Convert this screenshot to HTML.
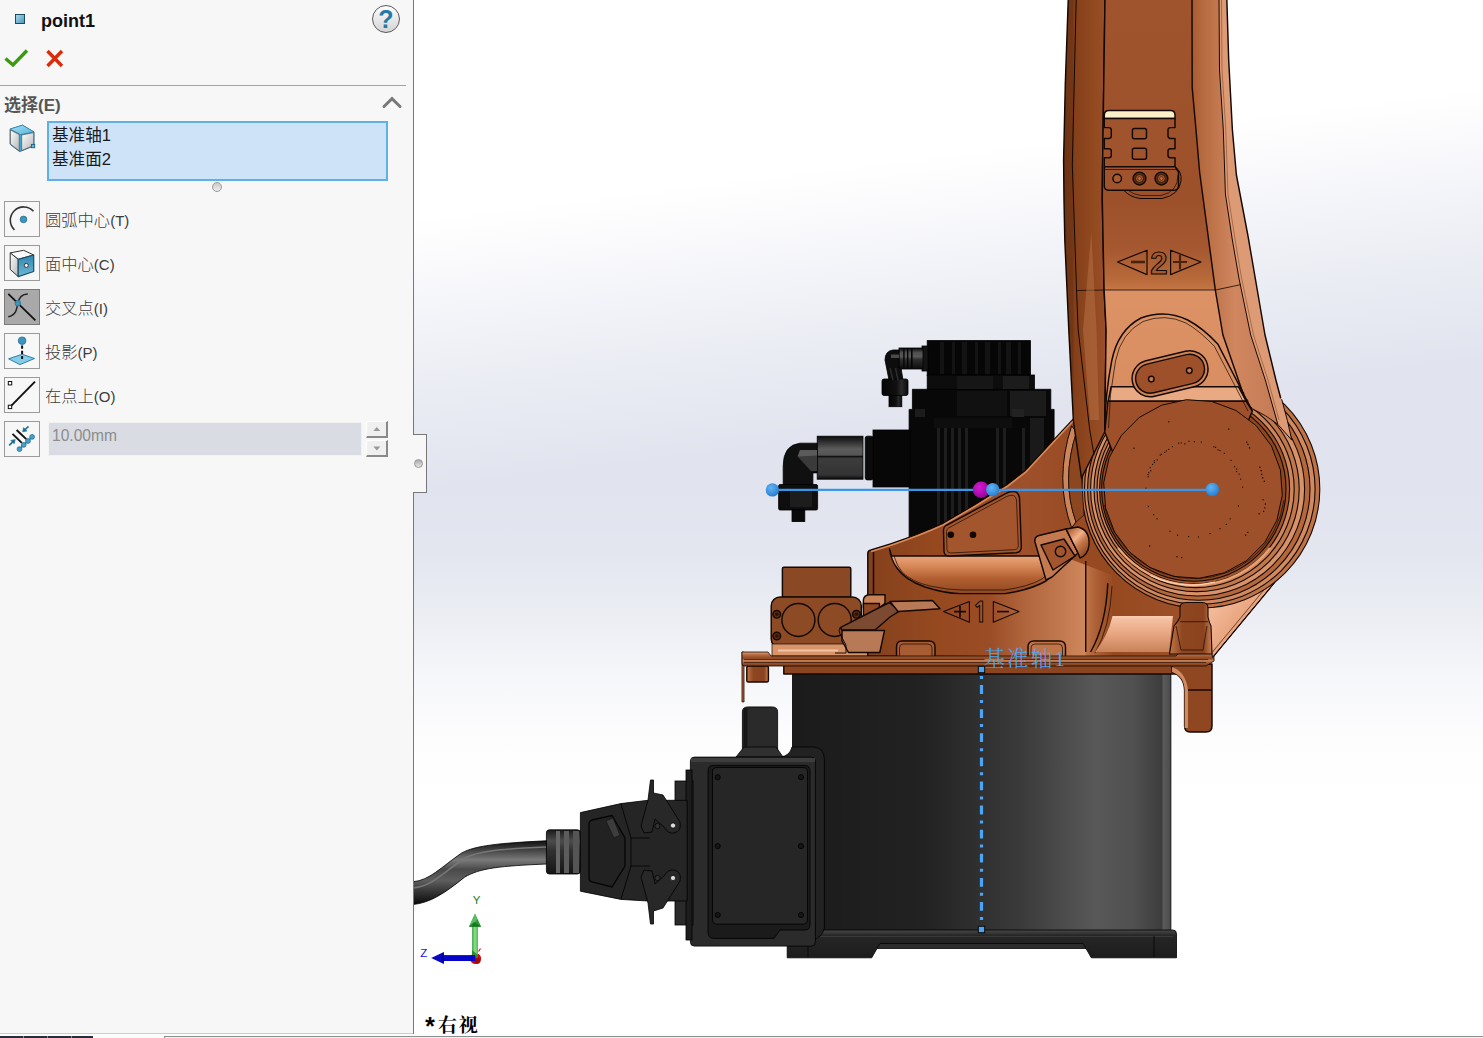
<!DOCTYPE html>
<html lang="zh">
<head>
<meta charset="utf-8">
<title>point1</title>
<style>
html,body{margin:0;padding:0;}
body{width:1483px;height:1038px;overflow:hidden;position:relative;background:#fff;
 font-family:"Liberation Sans","Noto Sans CJK SC",sans-serif;color:#444;}
#view{position:absolute;left:0;top:0;width:1483px;height:492px;background:linear-gradient(173deg,#ffffff 0%,#ffffff 40%,#fbfbfd 46%,#f3f4f9 55%,#ebedf4 65%,#e5e8f1 74%,#e1e4ee 80.5%,#e1e4ee 100%);}
#view2{position:absolute;left:0;top:492px;width:1483px;height:546px;background:linear-gradient(180deg,#e1e4ee 0%,#e4e7f0 12.5%,#eceef4 23.4%,#f6f7fa 34.4%,#fdfdfe 45.4%,#ffffff 55%,#ffffff 100%);}
#scene{position:absolute;left:0;top:0;width:1483px;height:1038px;}
#panel{position:absolute;left:0;top:0;width:413px;height:1033.5px;background:#f7f7f7;border-right:1.5px solid #787878;}
#tab{position:absolute;left:414px;top:434px;width:12px;height:57px;background:#f7f7f7;border:1.5px solid #787878;border-left:none;}
#tab::before{content:"";position:absolute;left:-2.5px;top:0;width:4px;height:100%;background:#f7f7f7;}
#tab i{position:absolute;left:0.3px;top:24px;width:9px;height:9px;border-radius:50%;box-sizing:border-box;border:1px solid #9a9a9a;background:linear-gradient(#a9a9a9,#e6e6e6);}
.abs{position:absolute;}
#title{left:41px;top:10px;font-weight:bold;font-size:18px;color:#111;line-height:22px;}
#sq{left:15px;top:14px;width:10px;height:10px;box-sizing:border-box;border:1.5px solid #1d4a63;background:linear-gradient(135deg,#a7d6ea,#4d9bbb);}
#help{left:372px;top:5px;width:28px;height:28px;box-sizing:border-box;border-radius:50%;border:1.3px solid #5a5a5a;background:linear-gradient(#fdfdfd,#d4d4d4);text-align:center;font-weight:bold;font-size:25px;line-height:26.5px;color:#2379a8;}
#sep{left:0;top:85px;width:406px;height:1.4px;background:#a3a3a3;}
#sel{left:4px;top:95px;font-weight:bold;font-size:17px;color:#555;line-height:22px;}
#list{left:47px;top:121px;width:341px;height:60px;box-sizing:border-box;border:2px solid #5eb0e6;background:#cfe3f8;font-size:16.6px;color:#1a1a1a;line-height:24px;padding:1px 0 0 3px;}
#grip{left:212px;top:182px;width:10px;height:10px;box-sizing:border-box;border-radius:50%;border:1px solid #9a9a9a;background:linear-gradient(#c9c9c9,#efefef);}
.btn{position:absolute;left:4px;width:36px;height:36px;box-sizing:border-box;border:1px solid #9b9b9b;background:#f7f7f7;}
.btn.on{background:#a9a9a9;border-color:#7a7a7a;}
.lbl{position:absolute;left:45px;font-size:16.3px;font-weight:300;color:#3c3c3c;margin-top:1px;line-height:24px;white-space:nowrap;}
.lbl span{font-size:15px;}
#inp{left:48px;top:422px;width:314px;height:34px;box-sizing:border-box;border:1.5px solid #f2f2f2;background:#d9dce2;font-size:15.6px;color:#8c8c8c;line-height:26px;padding-left:3px;}
.sp{position:absolute;left:366px;width:22px;height:17px;box-sizing:border-box;background:#f0f0f0;border:1px solid #fff;border-right:2px solid #8a8a8a;border-bottom:2px solid #8a8a8a;}
#bot{left:164px;top:1035.8px;width:1319px;height:3px;background:#f1f1f1;border-top:1.3px solid #8e8e8e;border-left:1px solid #8e8e8e;}
#bot0{left:0;top:1033.5px;width:1483px;height:5px;background:#fdfdfd;}
#botl{left:0;top:1033px;width:413px;height:1px;background:#cdcdcd;}
#botd{left:0;top:1036.3px;width:93px;height:2px;background:repeating-linear-gradient(90deg,#2b2b3c 0,#2b2b3c 23px,#8a8a96 23px,#8a8a96 24px);}
#vname{left:424.5px;top:1013.5px;font-family:"Liberation Serif","Noto Serif CJK SC",serif;font-weight:bold;font-size:19px;letter-spacing:1.8px;color:#000;line-height:24px;white-space:nowrap;}
#vname b{font-family:"Liberation Mono",monospace;font-size:25px;letter-spacing:0;position:relative;top:4.5px;margin-right:0.5px;margin-left:-2px;}
</style>
</head>
<body>
<div id="view"></div><div id="view2"></div>
<svg id="scene" viewBox="0 0 1483 1038" width="1483" height="1038">
<defs>
<linearGradient id="gArmL" x1="0" y1="0" x2="1" y2="0"><stop offset="0" stop-color="#6c3313"/><stop offset="0.22" stop-color="#733716"/><stop offset="0.26" stop-color="#84401b"/><stop offset="0.7" stop-color="#92491f"/><stop offset="1" stop-color="#99502a"/></linearGradient>
<linearGradient id="gArmF" gradientUnits="userSpaceOnUse" x1="0" y1="0" x2="0" y2="400"><stop offset="0" stop-color="#a0542d"/><stop offset="0.5" stop-color="#9d512b"/><stop offset="0.62" stop-color="#a55830"/><stop offset="0.7" stop-color="#b86a3a"/><stop offset="0.724" stop-color="#c47645"/><stop offset="0.7245" stop-color="#dc9264"/><stop offset="1" stop-color="#d98e61"/></linearGradient>
<linearGradient id="gArmR" x1="0" y1="0" x2="1" y2="0"><stop offset="0" stop-color="#a9592f"/><stop offset="0.12" stop-color="#b66a40"/><stop offset="0.5" stop-color="#d0875f"/><stop offset="0.8" stop-color="#c98058"/><stop offset="1" stop-color="#c47a52"/></linearGradient>
<linearGradient id="gHouse" gradientUnits="userSpaceOnUse" x1="868" y1="0" x2="1215" y2="0"><stop offset="0" stop-color="#84411d"/><stop offset="0.2" stop-color="#96491f"/><stop offset="0.45" stop-color="#9d502a"/><stop offset="0.7" stop-color="#96491f"/><stop offset="1" stop-color="#a0542d"/></linearGradient>
<linearGradient id="gHouseLt" gradientUnits="userSpaceOnUse" x1="990" y1="0" x2="1112" y2="0"><stop offset="0" stop-color="#c98055" stop-opacity="0"/><stop offset="0.5" stop-color="#c98055" stop-opacity="0.75"/><stop offset="0.78" stop-color="#cf875c" stop-opacity="1"/><stop offset="0.785" stop-color="#c07448" stop-opacity="1"/><stop offset="1" stop-color="#a85c33" stop-opacity="0.2"/></linearGradient>
<linearGradient id="gGroove" gradientUnits="userSpaceOnUse" x1="0" y1="556" x2="0" y2="594"><stop offset="0" stop-color="#e9a57c"/><stop offset="0.25" stop-color="#d98a5a"/><stop offset="0.6" stop-color="#b05e30"/><stop offset="1" stop-color="#8e4722"/></linearGradient>
<linearGradient id="gCyl" gradientUnits="userSpaceOnUse" x1="792" y1="0" x2="1171" y2="0"><stop offset="0" stop-color="#1b1b1b"/><stop offset="0.35" stop-color="#222"/><stop offset="0.6" stop-color="#3a3a3a"/><stop offset="0.8" stop-color="#585858"/><stop offset="0.9" stop-color="#505050"/><stop offset="0.975" stop-color="#3d3d3d"/><stop offset="0.98" stop-color="#5a5a5a"/><stop offset="1" stop-color="#4a4a4a"/></linearGradient>
<linearGradient id="gFoot" x1="0" y1="0" x2="0" y2="1"><stop offset="0" stop-color="#4a4a4a"/><stop offset="0.2" stop-color="#262626"/><stop offset="1" stop-color="#1c1c1c"/></linearGradient>
<linearGradient id="gFlange" x1="0" y1="0" x2="0" y2="1"><stop offset="0" stop-color="#e0a07a"/><stop offset="0.22" stop-color="#b5673a"/><stop offset="0.45" stop-color="#8c4822"/><stop offset="0.62" stop-color="#c88158"/><stop offset="0.8" stop-color="#9a5029"/><stop offset="1" stop-color="#7c3d19"/></linearGradient>
<linearGradient id="gNut" x1="0" y1="0" x2="0" y2="1"><stop offset="0" stop-color="#0c0c0c"/><stop offset="0.3" stop-color="#5c5c5c"/><stop offset="0.44" stop-color="#555"/><stop offset="0.47" stop-color="#111"/><stop offset="0.52" stop-color="#3c3c3c"/><stop offset="0.9" stop-color="#333"/><stop offset="1" stop-color="#0a0a0a"/></linearGradient>
<linearGradient id="gTube" x1="0" y1="0" x2="0" y2="1"><stop offset="0" stop-color="#0a0a0a"/><stop offset="0.22" stop-color="#4e4e4e"/><stop offset="0.4" stop-color="#5a5a5a"/><stop offset="0.55" stop-color="#2e2e2e"/><stop offset="1" stop-color="#0c0c0c"/></linearGradient>
<linearGradient id="gNutH" x1="0" y1="0" x2="1" y2="0"><stop offset="0" stop-color="#060606"/><stop offset="0.55" stop-color="#101010"/><stop offset="0.75" stop-color="#2a2a2a"/><stop offset="1" stop-color="#0a0a0a"/></linearGradient>
<linearGradient id="gCable" x1="0" y1="0" x2="0" y2="1"><stop offset="0" stop-color="#111"/><stop offset="0.12" stop-color="#3a3a3a"/><stop offset="0.3" stop-color="#7a7a7a"/><stop offset="0.45" stop-color="#4a4a4a"/><stop offset="0.62" stop-color="#5e5e5e"/><stop offset="0.85" stop-color="#2a2a2a"/><stop offset="1" stop-color="#0a0a0a"/></linearGradient>
<linearGradient id="gGland" x1="0" y1="0" x2="0" y2="1"><stop offset="0" stop-color="#1a1a1a"/><stop offset="0.25" stop-color="#4c4c4c"/><stop offset="0.45" stop-color="#333"/><stop offset="1" stop-color="#151515"/></linearGradient>
<radialGradient id="gBall" cx="0.4" cy="0.35" r="0.7"><stop offset="0" stop-color="#63b3f2"/><stop offset="0.6" stop-color="#3b92df"/><stop offset="1" stop-color="#2a78c2"/></radialGradient>
<radialGradient id="gMag" cx="0.4" cy="0.35" r="0.7"><stop offset="0" stop-color="#d41bd0"/><stop offset="0.7" stop-color="#a80aa8"/><stop offset="1" stop-color="#8a0790"/></radialGradient>
<linearGradient id="gLug" x1="0" y1="0" x2="1" y2="0"><stop offset="0" stop-color="#c47647"/><stop offset="0.3" stop-color="#8e4721"/><stop offset="0.8" stop-color="#8a431e"/><stop offset="1" stop-color="#c98055"/></linearGradient>
<linearGradient id="gGlint" x1="0" y1="0" x2="0" y2="1"><stop offset="0" stop-color="#f6c6aa"/><stop offset="0.45" stop-color="#eaa985"/><stop offset="1" stop-color="#c98259"/></linearGradient>
<linearGradient id="gGlint2" gradientUnits="userSpaceOnUse" x1="1215" y1="600" x2="1260" y2="640"><stop offset="0" stop-color="#f4bd9e"/><stop offset="0.5" stop-color="#e9a680"/><stop offset="1" stop-color="#cf8a62"/></linearGradient>
<linearGradient id="gBoss" gradientUnits="userSpaceOnUse" x1="1068" y1="532" x2="1088" y2="552"><stop offset="0" stop-color="#b5673a"/><stop offset="0.35" stop-color="#f3b088"/><stop offset="0.6" stop-color="#c5774a"/><stop offset="1" stop-color="#8e4721"/></linearGradient>
<linearGradient id="gRing" gradientUnits="userSpaceOnUse" x1="1100" y1="380" x2="1300" y2="600"><stop offset="0" stop-color="#c77a4c"/><stop offset="0.5" stop-color="#b3663a"/><stop offset="1" stop-color="#c98258"/></linearGradient>
</defs>
<g stroke="#000" stroke-width="0.8">
<rect x="927.2" y="340.6" width="103.2" height="35" fill="#060606"/>
<rect x="927.2" y="375" width="107.2" height="15" fill="#0d0d0d"/>
<path d="M912.4 389.3 H1050.8 V409.4 H1054.1 V560 H909.1 V409.4 H912.4 Z" fill="#080808"/>
<rect x="873" y="430" width="37" height="57" fill="#070707"/>
</g>
<rect x="940" y="342" width="4" height="32" fill="#131313"/><rect x="952" y="342" width="3" height="32" fill="#131313"/><rect x="962" y="342" width="5" height="32" fill="#131313"/><rect x="975" y="342" width="3" height="32" fill="#131313"/><rect x="985" y="342" width="5" height="32" fill="#131313"/><rect x="998" y="342" width="3" height="32" fill="#131313"/><rect x="1006" y="342" width="5" height="32" fill="#131313"/><rect x="1018" y="342" width="3" height="32" fill="#131313"/>
<rect x="957" y="376" width="36" height="13" fill="#161616"/><rect x="1003" y="376" width="26" height="13" fill="#1c1c1c"/>
<rect x="957" y="391" width="50" height="25" fill="#111"/><rect x="1010" y="391" width="36" height="25" fill="#1b1b1b"/><rect x="1012" y="409" width="12" height="8" fill="#222"/><rect x="915" y="409" width="10" height="8" fill="#1c1c1c"/>
<rect x="934" y="418" width="78" height="10" fill="#0e0e0e"/>
<rect x="937" y="428" width="3" height="125" fill="#1e1e1e"/><rect x="944" y="428" width="3" height="125" fill="#1e1e1e"/><rect x="951" y="428" width="3" height="125" fill="#1e1e1e"/><rect x="958" y="428" width="3" height="125" fill="#1e1e1e"/><rect x="965" y="428" width="3" height="125" fill="#1e1e1e"/><rect x="996" y="428" width="3" height="125" fill="#1e1e1e"/><rect x="1003" y="428" width="3" height="125" fill="#1e1e1e"/><rect x="1022" y="428" width="3" height="125" fill="#1e1e1e"/>
<rect x="1030" y="418" width="14" height="60" fill="#1a1a1a"/>
<g stroke="#000" stroke-width="0.8">
<rect x="922" y="346" width="6" height="25" fill="#141414"/>
<rect x="899" y="348" width="24" height="21" fill="url(#gTube)"/>
<path d="M899 350 H893 Q885 351 885 360 L889 380 H903 L901 368 H899 Z" fill="#0d0d0d"/>
<rect x="882" y="379" width="26" height="16.5" rx="2" fill="url(#gNutH)"/>
<rect x="889" y="395.5" width="12.8" height="11.2" fill="url(#gNutH)"/>
</g>
<rect x="903.2" y="348" width="1.4" height="21" fill="#050505"/><rect x="907" y="348" width="1.4" height="21" fill="#050505"/><rect x="911" y="348" width="1.6" height="21" fill="#050505"/>
<path d="M890 368 L893 380 M895.5 368 L898 380" stroke="#2c2c2c" stroke-width="1.6"/>
<rect x="891" y="354.5" width="8" height="3.5" fill="#4a4a4a"/>
<g stroke="#000" stroke-width="0.8">
<rect x="865.2" y="436.2" width="8" height="43.7" rx="2" fill="#0b0b0b"/>
<rect x="817.2" y="436.2" width="45.8" height="43" fill="url(#gNut)"/>
<path d="M817.2 443.2 H800 Q783.2 445 783.2 466 V485 H812.9 V472.9 H817.2 Z" fill="#101010"/>
<rect x="778.6" y="484.5" width="39" height="25.5" rx="1.5" fill="#0e0e0e"/>
<rect x="792" y="510" width="12.8" height="11.6" fill="#0a0a0a"/>
</g>
<path d="M800 450 L817 450 L817 471 L811 471 L798 457 Z" fill="#3a3a3a"/><path d="M800 450 L817 450 L817 455.5 L797.5 456.5 Z" fill="#5a5a5a"/>
<rect x="790" y="489" width="22" height="18" fill="#1d1d1d"/>
<rect x="792.5" y="668" width="378.4" height="263" fill="url(#gCyl)" stroke="#000" stroke-width="0.8"/>
<path d="M787.2 932 Q787.2 930 790 930 H1173 Q1176.5 930 1176.5 934 V957.8 H1091.3 L1086 948.5 H877 L871.7 957.8 H787.2 Z" fill="url(#gFoot)" stroke="#000" stroke-width="0.8"/>
<path d="M790 936.5 H1173" stroke="#3a3a3a" stroke-width="1"/><path d="M808 936 V957 M1154 936 V957" stroke="#000" stroke-width="0.7"/>
<path d="M877 948.5 L880 943.5 H1083 L1086 948.5" fill="#2c2c2c" stroke="#000" stroke-width="0.7"/>
<g stroke="#000" stroke-width="0.8">
<path d="M780 757 Q790 756 792 747 H814 Q824.4 748 824.4 760 V928 Q822 938 812 940 H792 Z" fill="#222"/>
<path d="M742.4 757 V712 Q742.4 706.9 748 706.9 H772 Q777.6 706.9 777.6 712 V757 Z" fill="#2a2a2a"/>
<path d="M736 757 L744 747 H776 L783 757 Z" fill="#303030"/>
<rect x="690.4" y="757.1" width="125" height="189" rx="4" fill="#2b2b2b"/>
<path d="M713 765.4 H805 Q810 765.4 810 771 V925 Q810 930 805 930 H780 L774 938.4 H714 Q708 938.4 708 932 V771 Q708 765.4 713 765.4 Z" fill="#1b1b1b"/>
<path d="M717 767.5 H803 Q807.5 767.5 807.5 772 V919 Q807.5 924.1 803 924.1 H717 Q712.5 924.1 712.5 919 V772 Q712.5 767.5 717 767.5 Z" fill="#262626"/>
</g>
<rect x="691" y="758" width="124" height="4" fill="#3d3d3d"/><rect x="743.5" y="708" width="4" height="40" fill="#161616"/>
<circle cx="717.7" cy="777.2" r="2.6" fill="#151515" stroke="#000" stroke-width="0.8"/>
<circle cx="801" cy="777.2" r="2.6" fill="#151515" stroke="#000" stroke-width="0.8"/>
<circle cx="717.7" cy="846.1" r="2.6" fill="#151515" stroke="#000" stroke-width="0.8"/>
<circle cx="801" cy="846.1" r="2.6" fill="#151515" stroke="#000" stroke-width="0.8"/>
<circle cx="717.7" cy="915" r="2.6" fill="#151515" stroke="#000" stroke-width="0.8"/>
<circle cx="801" cy="915" r="2.6" fill="#151515" stroke="#000" stroke-width="0.8"/>
<g stroke="#000" stroke-width="0.8">
<rect x="675" y="781" width="18" height="144" fill="#2a2a2a"/>
<rect x="686" y="770" width="6" height="170" fill="#1d1d1d"/>
<path d="M580.4 812.6 L620.9 803.6 L648 800.3 H687.2 V901 H648 L620.9 899.4 L580.4 891.2 Z" fill="#252525"/>
<path d="M592 820 L612 815.5 L625 838 L625 866 L612 887 L592 882 Q589 881 589 878 V824 Q589 821 592 820 Z" fill="#222" stroke="#050505" stroke-width="1.3"/>
<path d="M620.9 803.6 L631 838 V866 L620.9 899.4 M631 838 H650 M631 866 H650" fill="none"/>
<rect x="546.4" y="829.8" width="34" height="44.2" rx="3" fill="url(#gGland)"/>
</g>
<rect x="556" y="831" width="4" height="42" fill="#666"/><rect x="564" y="831" width="5" height="42" fill="#5c5c5c"/><rect x="573" y="831" width="6" height="42" fill="#555"/>
<path d="M606 821 L613 818 L620 835 L614 838 Z" fill="#3d3d3d" stroke="#111" stroke-width="0.6"/>
<g fill="#282828" stroke="#000" stroke-width="0.8">
<path d="M650.5 780 H653.5 V793 L663 795 L680 822 Q682 831 674 833 Q668 834 664 827 L655 819 L652 832 L644 833 L641 826 L648 800 Z"/>
<path d="M650.5 924 H653.5 V911 L663 908 L680 881 Q682 872 674 870 Q668 869 664 876 L655 884 L652 871 L644 870 L641 877 L648 903 Z"/>
</g>
<circle cx="673" cy="825.5" r="2.6" fill="#ddd" stroke="#000" stroke-width="0.7"/><circle cx="673" cy="878" r="2.6" fill="#ddd" stroke="#000" stroke-width="0.7"/><circle cx="657.5" cy="826" r="2.6" fill="#333" stroke="#000" stroke-width="0.7"/><circle cx="657.5" cy="878" r="2.6" fill="#333" stroke="#000" stroke-width="0.7"/>
<path d="M413 881.8 C430 880 440 868 461.6 853 C475 845.5 500 843 546.4 840.8 V864 C500 866 480 868 464.6 877.2 C445 893 430 903 413 904.5 Z" fill="url(#gCable)" stroke="#000" stroke-width="0.8"/>
<path d="M413 888 C432 886 442 874 463 859 C477 851 500 849 546 847" fill="none" stroke="#777" stroke-width="1.6"/>
<g stroke="#140802" stroke-width="1.45" stroke-linejoin="round">
<rect x="782.4" y="567.3" width="68.4" height="30" rx="1.5" fill="#8a4924"/>
<rect x="771.2" y="596.9" width="90.1" height="51" rx="9" fill="#8c4a25"/>
<circle cx="798.4" cy="619.9" r="16.5" fill="#8c4a25"/><circle cx="834.7" cy="619.9" r="16.5" fill="#8c4a25"/>
<circle cx="776.8" cy="614.3" r="3.8" fill="#5a2c12"/><circle cx="776.8" cy="614.3" r="1.8" fill="#2a1206" stroke="none"/>
<circle cx="776.8" cy="636" r="3.8" fill="#5a2c12"/><circle cx="776.8" cy="636" r="1.8" fill="#2a1206" stroke="none"/>
<circle cx="856.4" cy="614.3" r="3.8" fill="#5a2c12"/><circle cx="856.4" cy="614.3" r="1.8" fill="#2a1206" stroke="none"/>
<path d="M772 644 H868 V656 H772 Z" fill="#d9946a" stroke-width="0.7"/>
<path d="M778 650.5 H838" stroke="#f3c4a6" stroke-width="2.2"/>
<rect x="746.8" y="666" width="21.6" height="16" rx="1.5" fill="url(#gLug)"/>
<rect x="741.9" y="652" width="2.2" height="50" fill="#a0522d" stroke-width="0.6"/>
<rect x="783.8" y="665" width="392" height="9" fill="#8a4520"/>
<path d="M1172 664 H1212 V726 Q1212 732 1206 732 H1190 Q1184.6 732 1184.6 726 V690 Q1184 676 1172 672 Z" fill="#8e4721"/>
<path d="M1184.6 690 H1212" fill="none"/>
</g>
<path d="M1172 667 Q1186 672 1188 690 V728 H1184.6 V690 Q1184 676 1172 672 Z" fill="#d08a60"/>
<g stroke="#140802" stroke-width="1.45" stroke-linejoin="round">
<path d="M867.8 656 V553 Q868 550.5 871 550 L890.5 543.9 Q920 534 943 523.6 L975.5 504.4 L1007.8 484.2 L1026 470 L1054 439.7 L1080 412 L1200 470 L1312 500 L1289 565 L1212.6 657.3 L1212 658 Z" fill="url(#gHouse)"/>
<path d="M990 594 Q1030 592 1050 578 L1062 556 L1112 575 V656 H990 Z" fill="url(#gHouseLt)" stroke="none"/>
<path d="M873.5 552 V652" fill="none"/>
<path d="M889.5 549 Q891 560 897 568 Q905 580 925 587 Q945 593.4 960 593.6 H1005 Q1030 590 1046 581 Q1058 572 1062 556 L1055 548 L1040 556 H891.5 Z" fill="url(#gGroove)"/>
<path d="M894 556 Q897 566 902 572 Q912 582 930 586 Q948 590 962 590 H1004 Q1028 587 1042 579 Q1050 573 1053 566" fill="none" stroke-width="0.7"/>
<path d="M943.5 530 Q943.5 527 946 525.5 L1007 492.8 Q1018 488.5 1019.5 498 L1021.3 546 Q1021.5 552.3 1016 552.7 L949.5 556 Q944.5 556 944 551.5 Z" fill="#a3552d"/>
<path d="M946.5 531.5 Q946.5 529 948.5 528 L1007 496.3 Q1015.5 493 1016.5 500 L1018.3 545 Q1018.5 549.3 1014.5 549.7 L950.5 553 Q947.3 553 947 549.5 Z" fill="none" stroke-width="0.7"/>
<circle cx="950.8" cy="534.7" r="2.6" fill="#120802"/><circle cx="973" cy="534.7" r="2.6" fill="#120802"/>
</g>
<path d="M871 551.5 L890.5 545.4 Q920 535.5 943 525 L975.5 506 L1007.8 486 L1026 471.8 L1054 441.5 L1076 418" fill="none" stroke="#d98a5a" stroke-width="1.6"/>
<g stroke="#140802" stroke-width="1.45" stroke-linejoin="round">
<path d="M896.5 656.2 V647 Q896.5 641 902 641 H929 Q935 641 935 647 V656.2" fill="#a85c33"/>
<path d="M899.5 656.2 V648 Q899.5 644 903 644 H928 Q932 644 932 648 V656.2" fill="none" stroke-width="0.7"/>
<path d="M1028 656.2 V647 Q1028 641 1034 641 H1059.5 Q1065.5 641 1065.5 647 V656.2" fill="#c07447"/>
<path d="M1031 656.2 V648 Q1031 644 1035 644 H1058.5 Q1062.5 644 1062.5 648 V656.2" fill="none" stroke-width="0.7"/>
<path d="M1085.7 561 V652" fill="none"/>
<path d="M1107.8 583.3 Q1106 625 1090.6 652" fill="none"/><path d="M1112 586 Q1110 628 1095 653" fill="none" stroke-width="0.7"/>
<path d="M863.4 600 Q864 594.8 870 594.8 H885 V603.2 L879 608 H863.4 Z" fill="#c98258"/>
<rect x="863.4" y="603.5" width="16" height="21" fill="#8e4721"/>
<path d="M840.3 627.6 L889.2 602.5 L899.7 610.9 L890 617 L875 630 H842 Z" fill="#7b4a31"/>
<path d="M890 601.5 L932.5 600.5 L940 608.7 L898 611.5 Z" fill="#b87a56"/>
<path d="M842 630.5 H884.5 L879.8 652.5 H848.5 L842 641 Z" fill="#b87a56"/>
<path d="M840.3 627.6 Q838 630 840 634 L846 645 V653 H835" fill="none" stroke-width="1"/>
</g>
<path d="M1112.5 616 H1173 L1169 652 H1095 Q1108 636 1112.5 616 Z" fill="url(#gGlint)"/>
<path d="M1113 617 H1172" stroke="#f7cbb0" stroke-width="1.5"/>
<g fill="none" stroke="#140802" stroke-width="1.1" stroke-linejoin="round">
<path d="M943.5 611.6 L969.4 601.5 V622.2 Z"/><path d="M993.3 601.5 V622.2 L1019 611.6 Z"/>
<path d="M954 611.6 H966 M960 606 V617.5" stroke-width="1.6"/><path d="M997 611.6 H1009" stroke-width="1.6"/>
</g>
<text x="980.4" y="622.2" font-family="NanumGothic, Liberation Sans, sans-serif" font-weight="bold" font-size="28.5" text-anchor="middle" fill="#a3562d" stroke="#140802" stroke-width="1">1</text>
<g stroke="#140802" stroke-width="0.8">
<path d="M742 652 H768 L771 656 H1176 L1180 652 H1214 V661 L1206 666 H744 Q742 666 742 663 Z" fill="url(#gFlange)"/>
<path d="M744 659.5 H1208 M744 662.5 H1206" fill="none" stroke-width="0.6"/>
</g>
<g stroke="#140802" stroke-width="0.9">
<path d="M1205 600 L1280 575 L1289 565 L1212.6 657.3 L1209 640 Z" fill="url(#gGlint2)"/>
<path d="M1289 565 L1212.6 657.3" fill="none"/><path d="M1285.5 564 L1210.8 654" fill="none" stroke-width="0.6"/>
</g>
<circle cx="1200.8" cy="489" r="119" fill="#bd7346" stroke="#140802" stroke-width="1.1"/>
<circle cx="1199.8" cy="489" r="115.3" fill="#d08a61" stroke="#140802" stroke-width="1.1"/>
<circle cx="1198.8" cy="489" r="111.2" fill="#b3673b" stroke="#140802" stroke-width="1.1"/>
<circle cx="1197.6" cy="489" r="107" fill="#d8926a" stroke="#140802" stroke-width="1.1"/>
<circle cx="1196.6" cy="489" r="102.6" fill="#c0774c" stroke="#140802" stroke-width="1.1"/>
<circle cx="1195.6" cy="489" r="98.6" fill="#cd855b" stroke="#140802" stroke-width="1.1"/>
<circle cx="1194.6" cy="489" r="95" fill="#a0552d" stroke="#140802" stroke-width="1.1"/>
<circle cx="1193.8" cy="489" r="92.2" fill="#8c4721" stroke="#140802" stroke-width="1.1"/>
<path d="M1118 548 A96.5 96.5 0 0 0 1270 548" fill="none" stroke="#f1a878" stroke-width="2.2" opacity="0.9"/>
<path d="M1150 575.5 A96.5 96.5 0 0 0 1215 582" fill="none" stroke="#ffd9bf" stroke-width="1.2" opacity="0.9"/>
<g stroke="#140802" stroke-width="1.1" stroke-linejoin="round">
<path d="M1169.5 654 L1174 626 Q1178 621.7 1180 617 V608 Q1180 602.5 1186 602.5 H1202 Q1208 602.5 1208 608 V617 Q1209 622 1211 626 L1212 654 Z" fill="url(#gLug)"/>
<path d="M1180 621.7 H1208 M1176 626 L1181 650 M1207 626 L1203 650 M1181 650 H1203" fill="none" stroke-width="0.7"/>
</g>
<g stroke="#140802" stroke-width="1" fill="none">
<path d="M1071.6 425.8 Q1054 480 1071.6 527.8 L1076 522 Q1061 480 1076.5 432 Z" fill="#cb855c"/>
<path d="M1076.5 432 Q1061 480 1076 522 L1084 515 L1081.5 478 L1079 440 Z" fill="#8c4721" stroke-width="0.7"/>
</g>
<g stroke="#140802" stroke-width="1.45" stroke-linejoin="round">
<path d="M1068.3 -2 L1065.3 84 L1063.6 160 L1064 200 L1064.8 240 L1068.8 330 L1073.4 421 L1081.5 478 L1104.7 432 L1106.1 330 L1104.1 290 L1102.3 200 L1102.5 170 L1105 -2 Z" fill="url(#gArmL)"/>
<path d="M1076.2 -2 L1072.3 165 L1073.5 200 L1076.5 290 L1078.2 330 L1089.6 429 L1094 455" fill="none" stroke-width="1"/>
<path d="M1219 -2 L1219.5 70 L1223.3 130 L1225.4 194 L1232.2 239 L1238.9 278 L1250.7 335 L1265.3 380 L1277.8 424.3 L1291.8 440.2 L1287.4 420.5 L1281.7 399.3 L1275.9 380 L1265 335 L1248 236 L1236.4 175 L1232.4 130 L1228.7 60 L1226.8 -2 Z" fill="#dc9a75" stroke="none"/>
<path d="M1192 -2 L1192.2 88 L1196 130 L1199.6 172 L1210 250 L1215.3 289.8 L1222.9 335 L1237.3 380 L1252.8 408.9 Q1266 415 1277.8 424.3 L1265.3 380 L1250.7 335 L1238.9 278 L1232.2 239 L1225.4 194 L1223.3 130 L1219.5 70 L1219 -2 Z" fill="url(#gArmR)" stroke="none"/>
<path d="M1226.8 -2 L1228.7 60 L1232.4 130 L1236.4 175 L1248 236 L1265 335 L1275.9 380 L1280.7 398.3" fill="none"/>
<path d="M1219 -2 L1219.5 70 L1223.3 130 L1225.4 194 L1232.2 239 L1238.9 278 L1250.7 335 L1265.3 380 L1277.8 424.3 L1291.8 440.2 L1287.4 420.5 L1281.7 399.3" fill="none" stroke-width="1"/>
<path d="M1252.8 408.9 Q1266 415 1277.8 424.3" fill="none" stroke-width="0.9"/>
<path d="M1221.5 -2 L1222 70 L1225.8 130 L1228 194 L1235 239 L1241.5 278 L1253.5 335 L1268 380 L1279 420" fill="none" stroke-width="0.6" stroke="#8a4a28"/>
<path d="M1105 -2 L1102.5 170 L1102.3 200 L1104.1 290 L1106.1 330 L1104.7 432 L1112 432 L1246 402 L1222.9 335 L1215.3 289.8 L1210 250 L1199.6 172 L1196 130 L1192.2 88 L1192 -2 Z" fill="url(#gArmF)"/>
<path d="M1076.5 290.5 L1105.5 290 H1215.3 L1240.6 284.7" fill="none" stroke-width="0.8"/>
</g>
<path d="M1083 330 L1091.3 232 L1096.5 330 L1099 420 L1090 420 Z" fill="#b97248" opacity="0.5"/>
<g stroke="#140802" stroke-width="1.45" stroke-linejoin="round">
<path d="M1108 401 H1246 L1252.4 411 L1240 440 L1120 470 L1104.7 432 Z" fill="#9d502a"/>
<path d="M1111 386.8 H1238.5 L1246 401 H1108.3 Z" fill="#e9a983"/>
<path d="M1104.7 430.3 Q1105 395 1111.8 360.5 Q1118 330 1141 318 Q1165 309 1187.7 320 Q1203 328 1218 344.3 L1252.4 411" fill="none"/>
<path d="M1108.5 428 Q1109 395 1115.5 361 Q1121 333 1143 321.5 Q1165 313 1186 323 Q1200 331 1214.5 346.5 L1248 411" fill="none" stroke-width="0.7"/>
<g transform="rotate(-13.5 1170 373.6)"><rect x="1131.5" y="355.5" width="77" height="36.5" rx="18.2" fill="#cf8457"/><rect x="1135" y="359" width="70" height="29.5" rx="14.7" fill="#9d502a"/></g>
<circle cx="1151.3" cy="379.1" r="2.8" fill="#c87c4e"/><circle cx="1189.3" cy="370.6" r="2.8" fill="#c87c4e"/>
</g>
<path d="M1282.3 495.3 L1276.9 520.2 L1264.7 542.5 L1246.7 560.6 L1224.4 572.8 L1199.5 578.3 L1174.1 576.5 L1150.2 567.6 L1129.8 552.4 L1114.5 532.0 L1105.6 508.1 L1103.7 482.7 L1109.1 457.8 L1121.3 435.5 L1139.3 417.4 L1161.6 405.2 L1186.5 399.7 L1211.9 401.5 L1235.8 410.4 L1256.2 425.6 L1271.5 446.0 L1280.4 469.9 Z" fill="#9d502a" stroke="#140802" stroke-width="1"/><path d="M1104.5 505 A91 91 0 0 0 1284 500" fill="none" stroke="#140802" stroke-width="0.7"/><g fill="#140802"><rect x="1147.7" y="476.2" width="1.1" height="1.1"/><rect x="1147.5" y="474.0" width="1.1" height="1.1"/><rect x="1148.2" y="472.1" width="1.1" height="1.1"/><rect x="1150.2" y="470.2" width="1.1" height="1.1"/><rect x="1149.6" y="467.1" width="1.1" height="1.1"/><rect x="1152.0" y="463.9" width="1.1" height="1.1"/><rect x="1153.9" y="462.0" width="1.1" height="1.1"/><rect x="1153.8" y="460.3" width="1.1" height="1.1"/><rect x="1156.7" y="459.4" width="1.1" height="1.1"/><rect x="1159.7" y="454.6" width="1.1" height="1.1"/><rect x="1160.9" y="453.6" width="1.1" height="1.1"/><rect x="1164.1" y="451.9" width="1.1" height="1.1"/><rect x="1165.8" y="450.4" width="1.1" height="1.1"/><rect x="1168.2" y="448.8" width="1.1" height="1.1"/><rect x="1171.9" y="446.1" width="1.1" height="1.1"/><rect x="1178.0" y="442.6" width="1.1" height="1.1"/><rect x="1180.7" y="442.4" width="1.1" height="1.1"/><rect x="1184.3" y="443.3" width="1.1" height="1.1"/><rect x="1188.4" y="440.7" width="1.1" height="1.1"/><rect x="1193.8" y="441.2" width="1.1" height="1.1"/><rect x="1200.7" y="441.6" width="1.1" height="1.1"/><rect x="1213.4" y="446.3" width="1.1" height="1.1"/><rect x="1215.0" y="446.8" width="1.1" height="1.1"/><rect x="1217.6" y="449.4" width="1.1" height="1.1"/><rect x="1219.4" y="450.0" width="1.1" height="1.1"/><rect x="1223.8" y="452.8" width="1.1" height="1.1"/><rect x="1230.5" y="459.8" width="1.1" height="1.1"/><rect x="1234.1" y="466.1" width="1.1" height="1.1"/><rect x="1236.2" y="468.5" width="1.1" height="1.1"/><rect x="1236.0" y="471.0" width="1.1" height="1.1"/><rect x="1238.5" y="473.6" width="1.1" height="1.1"/><rect x="1240.1" y="478.6" width="1.1" height="1.1"/><rect x="1242.1" y="486.6" width="1.1" height="1.1"/><rect x="1237.9" y="505.4" width="1.1" height="1.1"/><rect x="1229.7" y="518.3" width="1.1" height="1.1"/><rect x="1225.8" y="523.8" width="1.1" height="1.1"/><rect x="1219.5" y="528.1" width="1.1" height="1.1"/><rect x="1209.5" y="533.0" width="1.1" height="1.1"/><rect x="1197.9" y="536.4" width="1.1" height="1.1"/><rect x="1188.0" y="536.0" width="1.1" height="1.1"/><rect x="1177.0" y="534.6" width="1.1" height="1.1"/><rect x="1169.5" y="530.7" width="1.1" height="1.1"/><rect x="1156.5" y="518.3" width="1.1" height="1.1"/><rect x="1153.1" y="514.1" width="1.1" height="1.1"/><rect x="1147.9" y="505.9" width="1.1" height="1.1"/><rect x="1145.4" y="487.7" width="1.1" height="1.1"/><rect x="1247.3" y="443.8" width="1.3" height="1.3"/><rect x="1248.9" y="447.2" width="1.3" height="1.3"/><rect x="1259.2" y="466.6" width="1.3" height="1.3"/><rect x="1260.5" y="470.0" width="1.3" height="1.3"/><rect x="1261.0" y="473.7" width="1.3" height="1.3"/><rect x="1262.0" y="477.2" width="1.3" height="1.3"/><rect x="1263.7" y="480.7" width="1.3" height="1.3"/><rect x="1262.5" y="499.2" width="1.2" height="1.2"/><rect x="1264.8" y="503.4" width="1.2" height="1.2"/><rect x="1264.2" y="507.2" width="1.2" height="1.2"/><rect x="1263.0" y="510.8" width="1.2" height="1.2"/><rect x="1258.5" y="513.2" width="1.2" height="1.2"/><rect x="1247.2" y="531.8" width="1.2" height="1.2"/><rect x="1245.0" y="534.6" width="1.2" height="1.2"/><rect x="1181.1" y="557.0" width="1.2" height="1.2"/><rect x="1176.4" y="556.1" width="1.2" height="1.2"/><rect x="1149.1" y="545.5" width="1.2" height="1.2"/><rect x="1133.3" y="447.6" width="1.2" height="1.2"/><rect x="1168.2" y="421.2" width="1.2" height="1.2"/><rect x="1228.2" y="428.5" width="1.2" height="1.2"/><rect x="1246.1" y="441.6" width="1.2" height="1.2"/></g>
<g stroke="#140802" stroke-width="1.45" stroke-linejoin="round">
<path d="M1104.3 118.5 V115 Q1104.3 110.4 1109 110.4 H1170.5 Q1175 110.4 1175 115 V118.5 Z" fill="#fdf0c9"/>
<path d="M1104.3 118.5 H1175 V127.6 H1170.5 Q1168 127.6 1168 130 V136 Q1168 138.4 1170.5 138.4 H1175 V148.8 H1170.5 Q1168 148.8 1168 151 V155.6 Q1168 157.8 1170.5 157.8 H1175 V166.7 H1104.3 V157.8 H1108.8 Q1111.3 157.8 1111.3 155.6 V151 Q1111.3 148.8 1108.8 148.8 H1104.3 V138.4 H1108.8 Q1111.3 138.4 1111.3 136 V130 Q1111.3 127.6 1108.8 127.6 H1104.3 Z" fill="#a0542d"/>
<rect x="1132.4" y="128.5" width="14.1" height="10.2" rx="2" fill="#a0542d"/><rect x="1132.4" y="148.3" width="14.1" height="11" rx="2" fill="#a0542d"/>
<path d="M1104.3 166.7 H1175 L1178.5 172 V186 Q1178 190.3 1174 190.3 H1109 Q1104.3 190.3 1104.3 186 Z" fill="#a0542d"/>
<path d="M1104.3 169.5 H1176.5" fill="none" stroke-width="0.7"/>
<path d="M1175.5 167 Q1182 172 1181 181 Q1179 195 1162 198.5 H1140 Q1130 197 1124 190.5" fill="none" stroke-width="1"/><path d="M1178 175 Q1178 192 1161 195.5 H1141 Q1133 194.5 1128.5 190.5" fill="none" stroke-width="0.7"/>
<circle cx="1117.2" cy="178.5" r="4.3" fill="#a85a31"/>
<circle cx="1139.5" cy="178.5" r="6.4" fill="#5f2d10"/><circle cx="1139.5" cy="178.5" r="4" fill="#a0542d" stroke-width="0.7"/><circle cx="1139.5" cy="178.5" r="1.8" fill="#c27445" stroke-width="0.5"/>
<circle cx="1161.4" cy="178.5" r="6.4" fill="#5f2d10"/><circle cx="1161.4" cy="178.5" r="4" fill="#a0542d" stroke-width="0.7"/><circle cx="1161.4" cy="178.5" r="1.8" fill="#c27445" stroke-width="0.5"/>
</g>
<g fill="none" stroke="#140802" stroke-width="1.2" stroke-linejoin="round">
<path d="M1117.5 262 L1147 250.2 V274.6 Z"/><path d="M1170.6 250.2 V274.6 L1201 262 Z"/>
<path d="M1131 262 H1145" stroke-width="2.6" stroke="#4a220c"/><path d="M1173 262 H1187 M1180 254.5 V269.5" stroke-width="2.2" stroke="#4a220c"/>
</g>
<text x="1158.8" y="273.5" font-family="Liberation Sans, sans-serif" font-weight="bold" font-size="31" text-anchor="middle" fill="#a55930" stroke="#140802" stroke-width="1.1">2</text>
<g stroke="#140802" stroke-width="1.45" stroke-linejoin="round">
<path d="M1035 542 Q1034 537 1039 535.5 L1066 529 L1078 553 L1052 577 L1046 580 Z" fill="#c47a4e"/>
<path d="M1066 529 L1078 527 Q1090 530 1089 545 Q1088 555 1080 558 L1078 553 Z" fill="url(#gBoss)"/>
<path d="M1041 545 L1064 539 L1075 556 L1053 570 Z" fill="#a3552d"/>
<circle cx="1060.5" cy="551.5" r="5.2" fill="#a3552d"/>
<path d="M1066 529 L1078 553 L1052 577" fill="none" stroke-width="0.7"/>
</g>
<path d="M772 489.9 H1213" stroke="#3d95e6" stroke-width="2.2"/>
<circle cx="772.4" cy="489.9" r="6.7" fill="url(#gBall)"/>
<circle cx="981.1" cy="489.8" r="8.2" fill="url(#gMag)"/>
<circle cx="992.7" cy="489.8" r="6.7" fill="url(#gBall)"/>
<circle cx="1212.4" cy="489.5" r="6.7" fill="url(#gBall)"/>
<path d="M981.5 675.9 V927" stroke="#4ba4f6" stroke-width="3.2" stroke-dasharray="3 6.2 8.8 6.1"/>
<rect x="978.3" y="666.3" width="6.4" height="6.4" fill="#4ba4f6" stroke="#0a0a0a" stroke-width="1"/><rect x="978.3" y="926.3" width="6.4" height="6.4" fill="#4ba4f6" stroke="#0a0a0a" stroke-width="1"/>
<text x="983.5" y="666.3" font-family="Liberation Serif, Noto Serif CJK SC, serif" font-weight="300" font-size="21.5" letter-spacing="2.1" fill="#4fa4f4">基准轴1</text>
<circle cx="475.6" cy="958.6" r="5.5" fill="#c40d0d"/><circle cx="477.5" cy="961" r="3" fill="#8e0606" opacity="0.6"/>
<path d="M478.5 951.5 l2 -3" stroke="#d22" stroke-width="1.3"/>
<defs><linearGradient id="gYs" x1="0" y1="0" x2="1" y2="0"><stop offset="0" stop-color="#3a9f3f"/><stop offset="0.45" stop-color="#8be08b"/><stop offset="1" stop-color="#4fbd55"/></linearGradient></defs>
<rect x="472.1" y="926" width="5.9" height="31.5" fill="url(#gYs)"/>
<path d="M472.1 950 L478 955 V958 L472.1 957.5 Z" fill="#1d7a26" opacity="0.75"/>
<path d="M475 913.6 L481.2 926.8 H468.9 Z" fill="#2a9a33"/><path d="M475 913.6 L477.5 919 L471.5 926.8 H468.9 Z" fill="#7fd987" opacity="0.55"/><path d="M468.9 926.8 L474 922 L481.2 926.8 Z" fill="#126b1c" opacity="0.8"/>
<rect x="443" y="955.1" width="32.3" height="5.9" fill="#0505c9"/>
<path d="M431.2 958 L443.8 952 V963.9 Z" fill="#0707c4"/><path d="M443.8 952 V963.9 L441 958 Z" fill="#04048a"/>
<text x="476.6" y="904.3" text-anchor="middle" font-family="Liberation Sans, sans-serif" font-size="11.5" fill="#157f25">Y</text>
<text x="423.8" y="957.3" text-anchor="middle" font-family="Liberation Sans, sans-serif" font-size="11.5" fill="#1111ee">Z</text>
</svg>
<div id="vname" class="abs"><b>*</b>右视</div>
<div id="panel">
 <div id="sq" class="abs"></div>
 <div id="title" class="abs">point1</div>
 <div id="help" class="abs">?</div>
 <svg class="abs" style="left:0;top:44px" width="80" height="30" viewBox="0 44 80 30">
  <path d="M5.5 58.5 L13 65 L27 50.5" fill="none" stroke="#3c9a10" stroke-width="3.4"/>
  <path d="M47.5 51 L62 66 M62 51 L47.5 66" fill="none" stroke="#d92c0b" stroke-width="3.4"/>
 </svg>
 <div id="sep" class="abs"></div>
 <div id="sel" class="abs">选择(E)</div>
 <svg class="abs" style="left:380px;top:94px" width="24" height="18" viewBox="380 94 24 18">
  <path d="M384 106.5 L392 98.7 L400 106.5" fill="none" stroke="#787878" stroke-width="3" stroke-linecap="round"/>
 </svg>
 <div id="list" class="abs">基准轴1<br>基准面2</div>
 <div id="grip" class="abs"></div>
 <svg class="abs" style="left:7px;top:122px" width="32" height="32" viewBox="7 122 32 32"><defs><linearGradient id="cg3" x1="0" y1="0" x2="1" y2="1"><stop offset="0" stop-color="#ffffff"/><stop offset="1" stop-color="#b4b4b4"/></linearGradient><linearGradient id="cg4" x1="0" y1="0" x2="1" y2="1"><stop offset="0" stop-color="#a5e0f5"/><stop offset="1" stop-color="#55b4dc"/></linearGradient></defs><path d="M10.1 129.1 L22.5 125.2 L34 132 L34 145.8 L21.4 151 L19.6 151.6 L10.1 144.3 Z" fill="#3ea6d4" stroke="#2a6f92" stroke-width="0.9" stroke-linejoin="round"/><path d="M10.1 129.1 L22.5 125.2 L34 132 L20.6 134.6 Z" fill="url(#cg4)" stroke="#2a7fa6" stroke-width="0.7" stroke-linejoin="round"/><path d="M10.4 130 L19.3 134.6 L19.3 151 L10.4 144 Z" fill="url(#cg3)" stroke="#555" stroke-width="0.7" stroke-linejoin="round"/><path d="M21.7 135 L33.7 132.6 L33.7 145.5 L21.7 150.5 Z" fill="url(#cg3)" stroke="#555" stroke-width="0.7" stroke-linejoin="round"/><rect x="31.4" y="144.4" width="3.3" height="3.3" fill="#5bbbe3" stroke="#1f5f82" stroke-width="0.9"/></svg>
 <div class="btn" style="top:201px"><svg width="36" height="36" viewBox="0 0 36 36" style="position:absolute;left:-1px;top:-1px"><path d="M29.4 10.2 A13.3 13.3 0 1 0 10.4 28.8" fill="none" stroke="#333" stroke-width="1.6"/><circle cx="19.5" cy="18.4" r="3.3" fill="#3f95bd" stroke="#1f6e96" stroke-width="0.8"/></svg></div><div class="lbl" style="top:207px">圆弧中心<span>(T)</span></div>
 <div class="btn" style="top:245px"><svg width="36" height="36" viewBox="0 0 36 36" style="position:absolute;left:-1px;top:-1px"><defs><linearGradient id="cg1" x1="0" y1="0" x2="1" y2="1"><stop offset="0" stop-color="#fdfdfd"/><stop offset="1" stop-color="#b9b9b9"/></linearGradient><linearGradient id="cg2" x1="0" y1="0" x2="0" y2="1"><stop offset="0" stop-color="#2f86b0"/><stop offset="1" stop-color="#6fb8d8"/></linearGradient></defs><path d="M6.2 7.9 L19.7 5.3 L29.7 10 L14.2 14.3 Z" fill="#fafafa" stroke="#333" stroke-width="1" stroke-linejoin="round"/><path d="M6.2 7.9 L14.2 14.3 L14.2 31.6 L6.2 24.4 Z" fill="url(#cg1)" stroke="#333" stroke-width="1" stroke-linejoin="round"/><path d="M14.2 14.3 L29.7 10 L29.7 26.5 L14.2 31.6 Z" fill="url(#cg2)" stroke="#1d4f6b" stroke-width="1.2" stroke-linejoin="round"/><circle cx="22.3" cy="20.4" r="2" fill="#fff" stroke="#333" stroke-width="1"/></svg></div><div class="lbl" style="top:251px">面中心<span>(C)</span></div>
 <div class="btn on" style="top:289px"><svg width="36" height="36" viewBox="0 0 36 36" style="position:absolute;left:-1px;top:-1px"><path d="M4.3 27.8 C12 26 13 20 13.8 14.4 C15 8 19 5 23.8 4.9" fill="none" stroke="#222" stroke-width="1.5"/><path d="M4.3 4.9 L31.4 31.3" stroke="#111" stroke-width="1.8"/><circle cx="13.8" cy="14.3" r="2.8" fill="#3f95bd" stroke="#1f6e96" stroke-width="0.8"/></svg></div><div class="lbl" style="top:295px">交叉点<span>(I)</span></div>
 <div class="btn" style="top:333px"><svg width="36" height="36" viewBox="0 0 36 36" style="position:absolute;left:-1px;top:-1px"><path d="M4.6 25.8 L18.1 21.3 L30.5 25.5 L15.9 31.6 Z" fill="#86cdea" stroke="#2b7ea8" stroke-width="1"/><path d="M18.1 12.6 V26" stroke="#111" stroke-width="2" stroke-dasharray="3.2 2"/><circle cx="18.1" cy="7.7" r="3.8" fill="#3f95bd" stroke="#1f6e96" stroke-width="0.8"/></svg></div><div class="lbl" style="top:339px">投影<span>(P)</span></div>
 <div class="btn" style="top:377px"><svg width="36" height="36" viewBox="0 0 36 36" style="position:absolute;left:-1px;top:-1px"><path d="M6.4 29.6 L31 4.6" stroke="#111" stroke-width="1.9"/><rect x="4.3" y="4.5" width="3.4" height="3.4" fill="#fff" stroke="#111" stroke-width="1"/><rect x="4.3" y="28.2" width="3.4" height="3.4" fill="#fff" stroke="#111" stroke-width="1"/></svg></div><div class="lbl" style="top:383px">在点上<span>(O)</span></div>
 <div class="btn" style="top:421px"><svg width="36" height="36" viewBox="0 0 36 36" style="position:absolute;left:-1px;top:-1px"><path d="M8.5 12.9 L17.8 21.9 M12.6 9 L22.3 18.1" stroke="#111" stroke-width="1.9"/><path d="M15.5 28.1 L28.1 15.9" stroke="#1f6e96" stroke-width="1.4"/><g fill="#4aa0c8" stroke="#1f6e96" stroke-width="0.8"><circle cx="15.5" cy="28.1" r="2.4"/><circle cx="19.7" cy="23.9" r="2.4"/><circle cx="24" cy="20" r="2.4"/><circle cx="28.1" cy="15.9" r="2.4"/></g><g stroke="#1f6e96" stroke-width="1.7" fill="#1f6e96"><path d="M24.5 5.4 L20.6 9"/><path d="M18.6 10.8 L23 10 L19.6 6.6 Z" stroke-width="0.6"/><path d="M5.2 24.3 L9 20.7"/><path d="M11.2 18.6 L6.8 19.4 L10.2 22.8 Z" stroke-width="0.6"/></g></svg></div>
 <div id="inp" class="abs">10.00mm</div>
 <div class="sp" style="top:421px"><svg width="22" height="17" style="position:absolute;left:-1px;top:-1px"><path d="M7.3 10 L14.3 10 L10.8 6 Z" fill="#9a9a9a"/></svg></div><div class="sp" style="top:440px"><svg width="22" height="17" style="position:absolute;left:-1px;top:-1px"><path d="M7.3 6.5 L14.3 6.5 L10.8 10.5 Z" fill="#9a9a9a"/></svg></div>
</div>
<div id="tab"><i></i></div>
<div id="bot0" class="abs"></div><div id="botl" class="abs"></div><div id="botd" class="abs"></div><div id="bot" class="abs"></div>
</body>
</html>
